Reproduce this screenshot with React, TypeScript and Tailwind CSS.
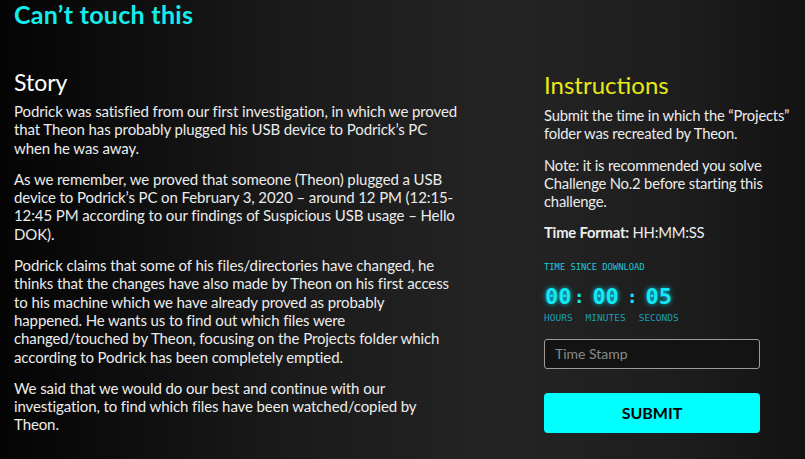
const storyParagraphs: string[][] = [
  [
    "Podrick was satisfied from our first investigation, in which we proved",
    "that Theon has probably plugged his USB device to Podrick’s PC",
    "when he was away.",
  ],
  [
    "As we remember, we proved that someone (Theon) plugged a USB",
    "device to Podrick’s PC on February 3, 2020 – around 12 PM (12:15-",
    "12:45 PM according to our findings of Suspicious USB usage – Hello",
    "DOK).",
  ],
  [
    "Podrick claims that some of his files/directories have changed, he",
    "thinks that the changes have also made by Theon on his first access",
    "to his machine which we have already proved as probably",
    "happened. He wants us to find out which files were",
    "changed/touched by Theon, focusing on the Projects folder which",
    "according to Podrick has been completely emptied.",
  ],
  [
    "We said that we would do our best and continue with our",
    "investigation, to find which files have been watched/copied by",
    "Theon.",
  ],
]

function Lines({ lines }: { lines: string[] }) {
  return (
    <p>
      {lines.map((l, i) => (
        <span key={i} className="block whitespace-nowrap">
          {l}
        </span>
      ))}
    </p>
  )
}

function Unit({ value, label }: { value: string; label: string }) {
  return (
    <div className="flex flex-col items-center">
      <span className="text-[22px] font-bold leading-[24px] text-[#12e8f6] [text-shadow:0_0_5px_#0ac8dc]">
        {value}
      </span>
      <span className="mt-[4px] text-[9.5px] leading-[10px] text-[#1b9fb2]">{label}</span>
    </div>
  )
}

function Colon() {
  return (
    <span className="flex w-[3px] justify-center text-[18px] font-bold leading-[24px] text-[#12e8f6]">:</span>
  )
}

export default function App() {
  const mono = { fontFamily: "'DejaVu Sans Mono', monospace" }
  return (
    <div
      style={{ fontFamily: "Lato, 'Noto Sans', sans-serif" }}
      className="min-h-screen w-full overflow-hidden bg-[linear-gradient(90deg,#040404_0%,#1a1a1a_35%,#242424_62%,#1d1d1d_85%,#121212_100%)] pl-[14px] pb-6 text-[#ececec]"
    >
      <h1 className="text-[25px] font-bold leading-[28px] tracking-[0.3px] text-[#14ecec]">Can’t touch this</h1>

      <div className="mt-[40px] flex">
        <div className="w-[462px] shrink-0">
          <h2 className="text-[23px] leading-[28px] text-white">Story</h2>
          <div className="mt-[6px] flex flex-col gap-[13px] text-[15px] leading-[18.3px] tracking-[-0.1px]">
            {storyParagraphs.map((p, i) => (
              <Lines key={i} lines={p} />
            ))}
          </div>
        </div>

        <div className="ml-[68px] w-[255px] shrink-0 pt-[3px]">
          <h2 className="text-[24px] leading-[28px] text-[#e8e817]">Instructions</h2>
          <div className="mt-[7px] flex flex-col gap-[13px] text-[14.8px] leading-[18.3px] tracking-[-0.2px]">
            <Lines lines={["Submit the time in which the “Projects”", "folder was recreated by Theon."]} />
            <Lines
              lines={["Note: it is recommended you solve", "Challenge No.2 before starting this", "challenge."]}
            />
            <p>
              <span className="font-bold">Time Format:</span> HH:MM:SS
            </p>
          </div>

          <div style={mono} className="mt-[19px] text-[8.8px] uppercase leading-[12px] text-[#22c9d6]">
            Time since download
          </div>

          <div style={mono} className="mt-[12px] flex items-start gap-[5px]">
            <Unit value="00" label="HOURS" />
            <Colon />
            <Unit value="00" label="MINUTES" />
            <Colon />
            <Unit value="05" label="SECONDS" />
          </div>

          <input
            placeholder="Time Stamp"
            className="mt-[16px] block h-[30px] w-[216px] rounded-[3px] border border-[#9a9a9a] bg-[#131313] px-[10px] text-[14px] text-white outline-none placeholder:text-[#8a8a8a]"
          />
          <button className="mt-[24px] block h-[40px] w-[216px] rounded-[4px] bg-[#00ffff] text-[16px] font-bold text-black">
            SUBMIT
          </button>
        </div>
      </div>
    </div>
  )
}
